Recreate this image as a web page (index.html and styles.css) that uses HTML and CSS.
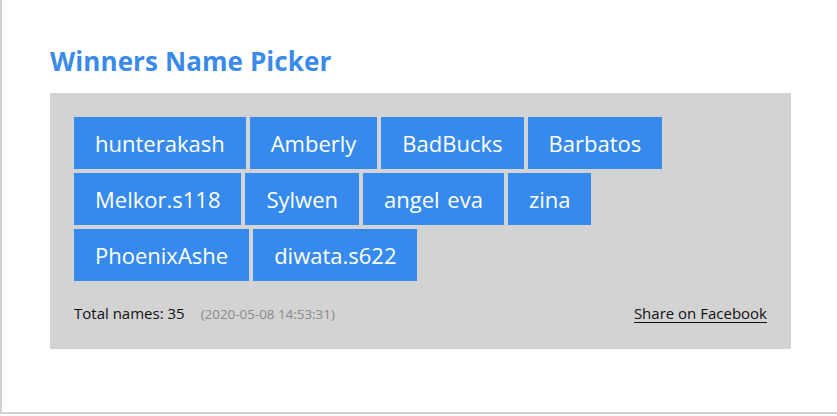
FILE: index.html
```html
<!DOCTYPE html>
<html>
<head>
<meta charset="utf-8">
<link rel="stylesheet" href="styles.css">
</head>
<body>
<div class="frame">
  <h1 class="title">Winners Name Picker</h1>
  <div class="panel">
    <div class="tags">
      <span class="tag">hunterakash</span>
      <span class="tag">Amberly</span>
      <span class="tag">BadBucks</span>
      <span class="tag">Barbatos</span>
      <span class="tag">Melkor.s118</span>
      <span class="tag">Sylwen</span>
      <span class="tag">angel eva</span>
      <span class="tag">zina</span>
      <span class="tag">PhoenixAshe</span>
      <span class="tag">diwata.s622</span>
    </div>
    <div class="footer">
      <div class="info"><span class="total">Total names: 35</span><span class="stamp">(2020-05-08 14:53:31)</span></div>
      <a class="share" href="#">Share on Facebook</a>
    </div>
  </div>
</div>
</body>
</html>
```

FILE: styles.css
```css
html, body {
  margin: 0;
  padding: 0;
  background: #ffffff;
}
body {
  font-family: "Open Sans", "Noto Sans", sans-serif;
}
.frame {
  box-sizing: border-box;
  height: 414px;
  border-left: 2px solid #d0d0d0;
  border-bottom: 2px solid #d0d0d0;
  padding: 43px 46px 0 48px;
}
.title {
  margin: 0 0 13px 0;
  font-size: 26px;
  font-weight: 700;
  color: #3a8ae9;
  line-height: 37px;
  letter-spacing: 0.1px;
}
.panel {
  background: #d3d3d3;
  padding: 24px 24px 25px 24px;
}
.tags {
  display: flex;
  flex-wrap: wrap;
  gap: 4px;
}
.tag {
  background: #368aee;
  color: #ffffff;
  font-size: 22px;
  line-height: 52px;
  height: 52px;
  padding: 0 21px;
  word-spacing: 2px;
}
.footer {
  display: flex;
  justify-content: space-between;
  align-items: center;
  margin-top: 21px;
  height: 22px;
}
.total {
  font-size: 15px;
  color: #111;
}
.stamp {
  font-size: 13.4px;
  color: #8a8a8a;
  margin-left: 16px;
}
.share {
  font-size: 15px;
  color: #111;
  text-decoration: none;
  border-bottom: 1px solid #111;
  line-height: 18px;
}
```
